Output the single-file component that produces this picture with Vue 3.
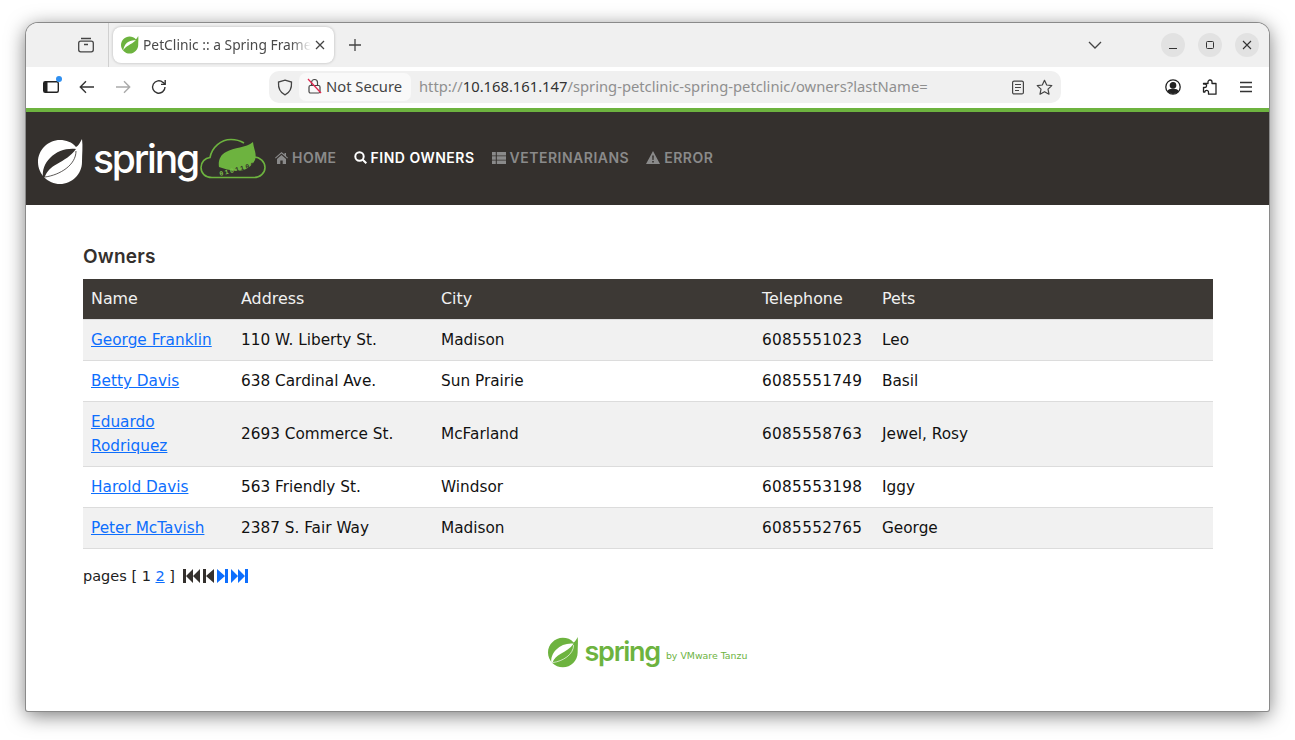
<script setup>
const owners = [
  { name: 'George Franklin', address: '110 W. Liberty St.', city: 'Madison', telephone: '6085551023', pets: 'Leo' },
  { name: 'Betty Davis', address: '638 Cardinal Ave.', city: 'Sun Prairie', telephone: '6085551749', pets: 'Basil' },
  { name: 'Eduardo Rodriquez', address: '2693 Commerce St.', city: 'McFarland', telephone: '6085558763', pets: 'Jewel, Rosy' },
  { name: 'Harold Davis', address: '563 Friendly St.', city: 'Windsor', telephone: '6085553198', pets: 'Iggy' },
  { name: 'Peter McTavish', address: '2387 S. Fair Way', city: 'Madison', telephone: '6085552765', pets: 'George' },
]
</script>

<template>
  <div class="desktop">
    <div class="window">
      <div class="tabbar">
        <div class="tab-side">
          <svg width="18" height="18" viewBox="0 0 18 18" fill="none" stroke="#444" stroke-width="1.3">
            <path d="M4 2.500h10" />
            <rect x="1.700" y="5.200" width="14.600" height="10.600" rx="2" />
            <path d="M7 8.500h4" />
          </svg>
        </div>
        <div class="tab">
          <svg width="18" height="18" viewBox="0 0 46 46">
            <path fill="#6db33f" d="M44 0C42 4 40 7 38 8 34 3 28 1 22 1 10 1 0 11 0 23s10 22 22 22 22-10 22-22c0-8 1-16 0-23Z" />
            <path fill="#fff" d="M38 11C24 9 7 17 6 38c4-13 20-15 32-27Z" />
          </svg>
          <span class="tab-title">PetClinic :: a Spring Frame</span>
          <svg width="10" height="10" viewBox="0 0 10 10" stroke="#444" stroke-width="1.300"><path d="M1 1l8 8M9 1l-8 8" /></svg>
        </div>
        <svg class="plus" width="14" height="14" viewBox="0 0 14 14" stroke="#444" stroke-width="1.300"><path d="M7 1v12M1 7h12" /></svg>
        <svg class="chevron" width="14" height="8" viewBox="0 0 14 8" fill="none" stroke="#444" stroke-width="1.300"><path d="M1 1l6 6 6-6" /></svg>
        <div class="win-btns">
          <span class="win-btn"><svg width="10" height="10" viewBox="0 0 10 10" stroke="#333" stroke-width="1"><path d="M1 8.500h8" /></svg></span>
          <span class="win-btn"><svg width="10" height="10" viewBox="0 0 10 10" fill="none" stroke="#333" stroke-width="1"><rect x="1.500" y="1.500" width="7" height="7" rx="1" /></svg></span>
          <span class="win-btn"><svg width="10" height="10" viewBox="0 0 10 10" stroke="#333" stroke-width="1.100"><path d="M1 1l8 8M9 1l-8 8" /></svg></span>
        </div>
      </div>

      <div class="toolbar">
        <span class="tool sidebar-btn">
          <svg width="18" height="16" viewBox="0 0 18 16" fill="none" stroke="#222" stroke-width="1.400">
            <rect x="1.700" y="2.700" width="14.600" height="10.600" rx="1.500" />
            <rect x="2" y="3" width="3.500" height="10" fill="#222" stroke="none" />
          </svg>
          <i class="dot"></i>
        </span>
        <span class="tool">
          <svg width="16" height="14" viewBox="0 0 16 14" fill="none" stroke="#333" stroke-width="1.400"><path d="M15 7H1.500M7 1.300 1.300 7 7 12.700" /></svg>
        </span>
        <span class="tool">
          <svg width="16" height="14" viewBox="0 0 16 14" fill="none" stroke="#aaa" stroke-width="1.400"><path d="M1 7h13.500M9 1.300 14.700 7 9 12.700" /></svg>
        </span>
        <span class="tool">
          <svg width="16" height="16" viewBox="0 0 16 16" fill="none" stroke="#333" stroke-width="1.400"><path d="M14 8a6.200 6.200 0 1 1-2-4.600L14 5" /><path d="M14.200 1v4.400H10" /></svg>
        </span>

        <div class="urlbar">
          <svg width="16" height="17" viewBox="0 0 16 17" fill="none" stroke="#444" stroke-width="1.300"><path d="M8 1.200 14.500 3c.4 6-1.400 10.500-6.500 12.800C2.900 13.500 1.100 9 1.500 3L8 1.200Z" /></svg>
          <div class="secure">
            <svg width="15" height="16" viewBox="0 0 15 16" fill="none" stroke="#444" stroke-width="1.200">
              <rect x="2" y="7.500" width="11" height="7.500" rx="1.500" />
              <path d="M4.500 7.500V4.500a3 3 0 0 1 6 0v3" />
              <path d="M1 1l13 14" stroke="#e22850" stroke-width="1.300" />
            </svg>
            <span>Not Secure</span>
          </div>
          <div class="url"><span class="dim">http://</span>10.168.161.147<span class="dim">/spring-petclinic-spring-petclinic/owners?lastName=</span></div>
          <svg width="14" height="15" viewBox="0 0 14 15" fill="none" stroke="#444" stroke-width="1.200"><rect x="1.600" y="1.100" width="10.800" height="12.800" rx="1.500" /><path d="M4 4.500h6M4 7.500h6M4 10.500h4" /></svg>
          <svg class="star" width="17" height="17" viewBox="0 0 17 17" fill="none" stroke="#444" stroke-width="1.200"><path d="M8.500 1.300l2.200 4.700 5.100.6-3.800 3.500 1 5.100-4.500-2.500-4.500 2.500 1-5.100L1.200 6.600l5.100-.6Z" stroke-linejoin="round" /></svg>
        </div>

        <div class="tools-right">
          <svg width="16" height="16" viewBox="0 0 16 16" fill="none" stroke="#222" stroke-width="1.300"><circle cx="8" cy="8" r="7.200" /><circle cx="8" cy="6.300" r="2.700" fill="#222" /><path d="M3 12c1-2.200 9-2.200 10 0-2 3-8 3-10 0Z" fill="#222" /></svg>
          <svg width="16" height="17" viewBox="0 0 16 17" fill="none" stroke="#222" stroke-width="1.300"><path d="M6 4.500V3a2 2 0 0 1 4 0v1.500h4v10.700H6.500v-2a1.800 1.800 0 0 0-3.600-.1V13H1.500V8.500h1.400a1.700 1.700 0 0 0 0-3.400H1.500V4.500Z" stroke-linejoin="round" /></svg>
          <svg width="14" height="12" viewBox="0 0 14 12" stroke="#333" stroke-width="1.300"><path d="M1 1.500h12M1 6h12M1 10.500h12" /></svg>
        </div>
      </div>

      <div class="page">
        <nav class="navbar">
          <div class="brand">
            <svg class="brand-leaf" width="46" height="46" viewBox="0 0 46 46">
              <path fill="#fff" d="M44 0C42 4 40 7 38 8 34 3 28 1 22 1 10 1 0 11 0 23s10 22 22 22 22-10 22-22c0-8 1-16 0-23Z" />
              <path fill="#34302d" d="M38 10C28 9 19 12 12 19 7 24 4 31 5 38l1.500.5C9 32 13 28 19 25 26 21 33 17 38 10Z" />
              <path fill="none" stroke="#34302d" stroke-width=".8" d="M38 12C38 26 22 36 7 38" />
            </svg>
            <span class="wordmark">spring</span>
            <svg class="cloud" width="66" height="42" viewBox="0 0 66 42">
              <path fill="none" stroke="#6db33f" stroke-width="1.600" d="M12 39.500C5 39.500 1 35 1 29.500 1 24 5 20 10 19.500 12 9 21 1.500 31 1.500c5 0 9 1 13 3.500M54 19c6 0 11 5 11 10.500S60 39.500 54 39.500H12" />
              <path fill="#6db33f" d="M53 4C54 12 57 16 55 22 51 30 44 33 36 33 30 32 24 31 19 29 18 23 20 17 26 14 34 9 46 10 53 4Z" />
              <text class="bits" transform="rotate(-15 20 38)" x="20" y="38"><tspan fill="#7cc44a">010</tspan><tspan fill="#34302d">1100</tspan></text>
            </svg>
          </div>
          <ul class="menu">
            <li class="menu-item">
              <svg width="13" height="12" viewBox="0 0 13 12" fill="currentColor"><path d="M6.500 0 0 5.800l.7.700L6.500 1.400l5.800 5.100.7-.7-2-1.800V1H9.500v1.500ZM2 7v5h3.300V8.500h2.400V12H11V7L6.500 3Z" /></svg>
              <span>HOME</span>
            </li>
            <li class="menu-item active">
              <svg width="13" height="13" viewBox="0 0 13 13" fill="none" stroke="currentColor" stroke-width="2"><circle cx="5.500" cy="5.500" r="4.200" /><path d="M8.500 8.500 12.300 12.300" /></svg>
              <span>FIND OWNERS</span>
            </li>
            <li class="menu-item">
              <svg width="14" height="12" viewBox="0 0 14 12" fill="currentColor"><path d="M0 0h3.800v3.400H0zM4.800 0H14v3.400H4.800zM0 4.300h3.800v3.400H0zM4.800 4.300H14v3.400H4.800zM0 8.600h3.800V12H0zM4.800 8.600H14V12H4.800z" /></svg>
              <span>VETERINARIANS</span>
            </li>
            <li class="menu-item">
              <svg width="14" height="13" viewBox="0 0 14 13" fill="currentColor"><path fill-rule="evenodd" d="M7 0 14 13H0ZM6.200 4.500l.2 4.500h1.200l.2-4.500ZM6.200 10v1.500h1.600V10Z" /></svg>
              <span>ERROR</span>
            </li>
          </ul>
        </nav>

        <main class="content">
          <h2 class="title">Owners</h2>
          <table class="owners">
            <colgroup>
              <col class="c-name" />
              <col class="c-address" />
              <col class="c-city" />
              <col class="c-tel" />
              <col class="c-pets" />
              <col />
            </colgroup>
            <thead>
              <tr>
                <th>Name</th>
                <th>Address</th>
                <th>City</th>
                <th>Telephone</th>
                <th>Pets</th>
                <th></th>
              </tr>
            </thead>
            <tbody>
              <tr v-for="o in owners" :key="o.telephone">
                <td><a href="#">{{ o.name }}</a></td>
                <td>{{ o.address }}</td>
                <td>{{ o.city }}</td>
                <td class="tel">{{ o.telephone }}</td>
                <td>{{ o.pets }}</td>
                <td></td>
              </tr>
            </tbody>
          </table>

          <div class="pager">
            <span>pages [ 1 <a href="#">2</a> ]</span>
            <span class="pager-icons">
              <svg width="17" height="14" viewBox="0 0 17 14" fill="#34302d"><path d="M0 0h3v14H0zM3 7l7-7v14zM10 7l7-7v14z" /></svg>
              <svg width="11" height="14" viewBox="0 0 11 14" fill="#34302d"><path d="M0 0h3v14H0zM3 7l8-7v14z" /></svg>
              <svg width="11" height="14" viewBox="0 0 11 14" fill="#0d6efd"><path d="M0 0l8 7-8 7zM8 0h3v14H8z" /></svg>
              <svg width="17" height="14" viewBox="0 0 17 14" fill="#0d6efd"><path d="M0 0l7 7-7 7zM7 0l7 7-7 7zM14 0h3v14h-3z" /></svg>
            </span>
          </div>

          <div class="foot">
            <svg width="31" height="31" viewBox="0 0 46 46">
              <path fill="#6db33f" d="M44 0C42 4 40 7 38 8 34 3 28 1 22 1 10 1 0 11 0 23s10 22 22 22 22-10 22-22c0-8 1-16 0-23Z" />
              <path fill="#fff" d="M38 10C28 9 19 12 12 19 7 24 4 31 5 38l1.500.5C9 32 13 28 19 25 26 21 33 17 38 10Z" />
              <path fill="none" stroke="#fff" stroke-width="1" d="M38 12C38 26 22 36 7 38" />
            </svg>
            <span class="foot-word">spring</span>
            <span class="foot-by">by VMware Tanzu</span>
          </div>
        </main>
      </div>
    </div>
  </div>
</template>

<style>
html, body {
  margin: 0;
  background: #fff;
}
</style>

<style scoped>
.desktop {
  box-sizing: border-box;
  width: 1295px;
  height: 740px;
  padding: 23px 26px 29px;
  overflow: hidden;
}

.window {
  display: flex;
  flex-direction: column;
  height: 688px;
  border-radius: 12px 12px 2px 2px;
  background: #fff;
  overflow: hidden;
  box-shadow: 0 0 0 1px #8a8a8a, 0 4px 20px rgba(0, 0, 0, 0.55);
}

/* ---- tabs ---- */
.tabbar {
  display: flex;
  align-items: center;
  height: 44px;
  background: #f0f0f0;
  flex: none;
}

.tab-side {
  display: flex;
  align-items: center;
  justify-content: center;
  box-sizing: border-box;
  width: 83px;
  height: 44px;
  padding-left: 37px;
  border-right: 1px solid #d0d0d0;
}

.tab {
  display: flex;
  align-items: center;
  box-sizing: border-box;
  width: 221px;
  height: 36px;
  margin-left: 4px;
  padding: 0 11px 0 8px;
  gap: 4px;
  background: #fff;
  border-radius: 8px;
  box-shadow: 0 0 3px rgba(0, 0, 0, 0.25);
  font: 13.800px "Noto Sans", sans-serif;
  color: #4a4a4a;
}

.tab svg {
  flex: none;
}

.tab-title {
  flex: 1;
  padding-bottom: 2px;
  white-space: nowrap;
  -webkit-mask-image: linear-gradient(to right, #000 88%, transparent);
  mask-image: linear-gradient(to right, #000 88%, transparent);
}

.plus {
  margin-left: 14px;
}

.chevron {
  margin-left: 726px;
}

.win-btns {
  display: flex;
  gap: 13px;
  margin-left: 59px;
}

.win-btn {
  display: flex;
  align-items: center;
  justify-content: center;
  width: 24px;
  height: 24px;
  border-radius: 50%;
  background: #e2e2e2;
}

/* ---- toolbar ---- */
.toolbar {
  display: flex;
  align-items: center;
  box-sizing: border-box;
  height: 41px;
  padding: 0 0 1px 7px;
  background: #fff;
  flex: none;
}

.tool {
  position: relative;
  display: flex;
  align-items: center;
  justify-content: center;
  width: 36px;
  height: 32px;
}

.dot {
  position: absolute;
  top: 5px;
  right: 7px;
  width: 6px;
  height: 6px;
  border-radius: 50%;
  background: #2f8ff0;
}

.urlbar {
  display: flex;
  align-items: center;
  box-sizing: border-box;
  width: 792px;
  height: 32px;
  margin-left: 92px;
  padding: 0 8px;
  background: #f0f0f0;
  border-radius: 10px;
}

.secure {
  display: flex;
  align-items: center;
  gap: 4px;
  box-sizing: border-box;
  width: 112px;
  height: 28px;
  margin-left: 6px;
  padding: 0 0 2px 8px;
  background: #f9f9f9;
  border-radius: 7px;
  font: 14.750px "Noto Sans", sans-serif;
  color: #444;
}

.url {
  flex: 1;
  margin-left: 8px;
  padding-bottom: 2px;
  font: 14.750px "Noto Sans", sans-serif;
  color: #333;
  white-space: nowrap;
}

.dim {
  color: #8f8f8f;
}

.star {
  margin-left: 11px;
}

.tools-right {
  display: flex;
  align-items: center;
  gap: 21px;
  margin-left: 104px;
}

/* ---- page ---- */
.page {
  flex: 1;
  border-top: 4px solid #6db33f;
  font-family: "DejaVu Sans", sans-serif;
  font-size: 15.300px;
  color: #212121;
}

.navbar {
  display: flex;
  align-items: center;
  height: 93px;
  padding-left: 12px;
  background: #34302d;
}

.brand {
  display: flex;
  align-items: center;
}

.brand-leaf {
  margin-top: 6px;
}

.wordmark {
  margin-left: 9px;
  font: 500 39px "Inter", sans-serif;
  letter-spacing: -2.200px;
  color: #fff;
}

.cloud {
  margin: 1px 0 0 2px;
}

.bits {
  font: bold 6.500px "Liberation Mono", monospace;
  letter-spacing: 1.500px;
}

.menu {
  display: flex;
  gap: 17px;
  margin: 0 0 2px 9px;
  padding: 0;
  list-style: none;
}

.menu-item {
  display: flex;
  align-items: center;
  gap: 4px;
  font: 600 14px "Inter", sans-serif;
  letter-spacing: 0.500px;
  color: #8a8a8a;
}

.menu-item.active {
  color: #fff;
}

.content {
  padding: 40px 57px 0;
}

.title {
  margin: 0 0 10px;
  font: 600 19px/24px "Inter", sans-serif;
  letter-spacing: 0.200px;
  color: #34302d;
}

.owners {
  width: 1130px;
  table-layout: fixed;
  border-collapse: separate;
  border-spacing: 0;
}

.c-name { width: 150px; }
.c-address { width: 200px; }
.c-city { width: 321px; }
.c-tel { width: 120px; }
.c-pets { width: 339px; }

.owners th {
  height: 24px;
  padding: 8px;
  border-bottom: 1px solid #dedede;
  background: #3d3935;
  background-clip: padding-box;
  color: #f1f1f1;
  font-size: 15.900px;
  font-weight: 500;
  text-align: left;
  line-height: 24px;
}

.owners td {
  padding: 8px;
  border-bottom: 1px solid #dcdcdc;
  line-height: 24px;
  color: #111;
}

.owners td.tel {
  letter-spacing: 0.300px;
}

.owners tbody tr:nth-child(odd) td {
  background: #f1f1f1;
}

.owners a,
.pager a {
  color: #0d6efd;
}

.pager {
  display: flex;
  align-items: center;
  gap: 8px;
  height: 24px;
  margin-top: 15px;
  font-size: 14.500px;
}

.pager-icons {
  display: flex;
  gap: 3px;
}

.foot {
  display: flex;
  align-items: center;
  justify-content: center;
  height: 31px;
  margin-top: 49px;
  color: #6db33f;
}

.foot-word {
  margin: 0 0 3px 6px;
  font: 600 27px "Inter", sans-serif;
  letter-spacing: -1.300px;
}

.foot-by {
  margin-left: 6px;
  padding-top: 6px;
  font-size: 9.400px;
}
</style>
